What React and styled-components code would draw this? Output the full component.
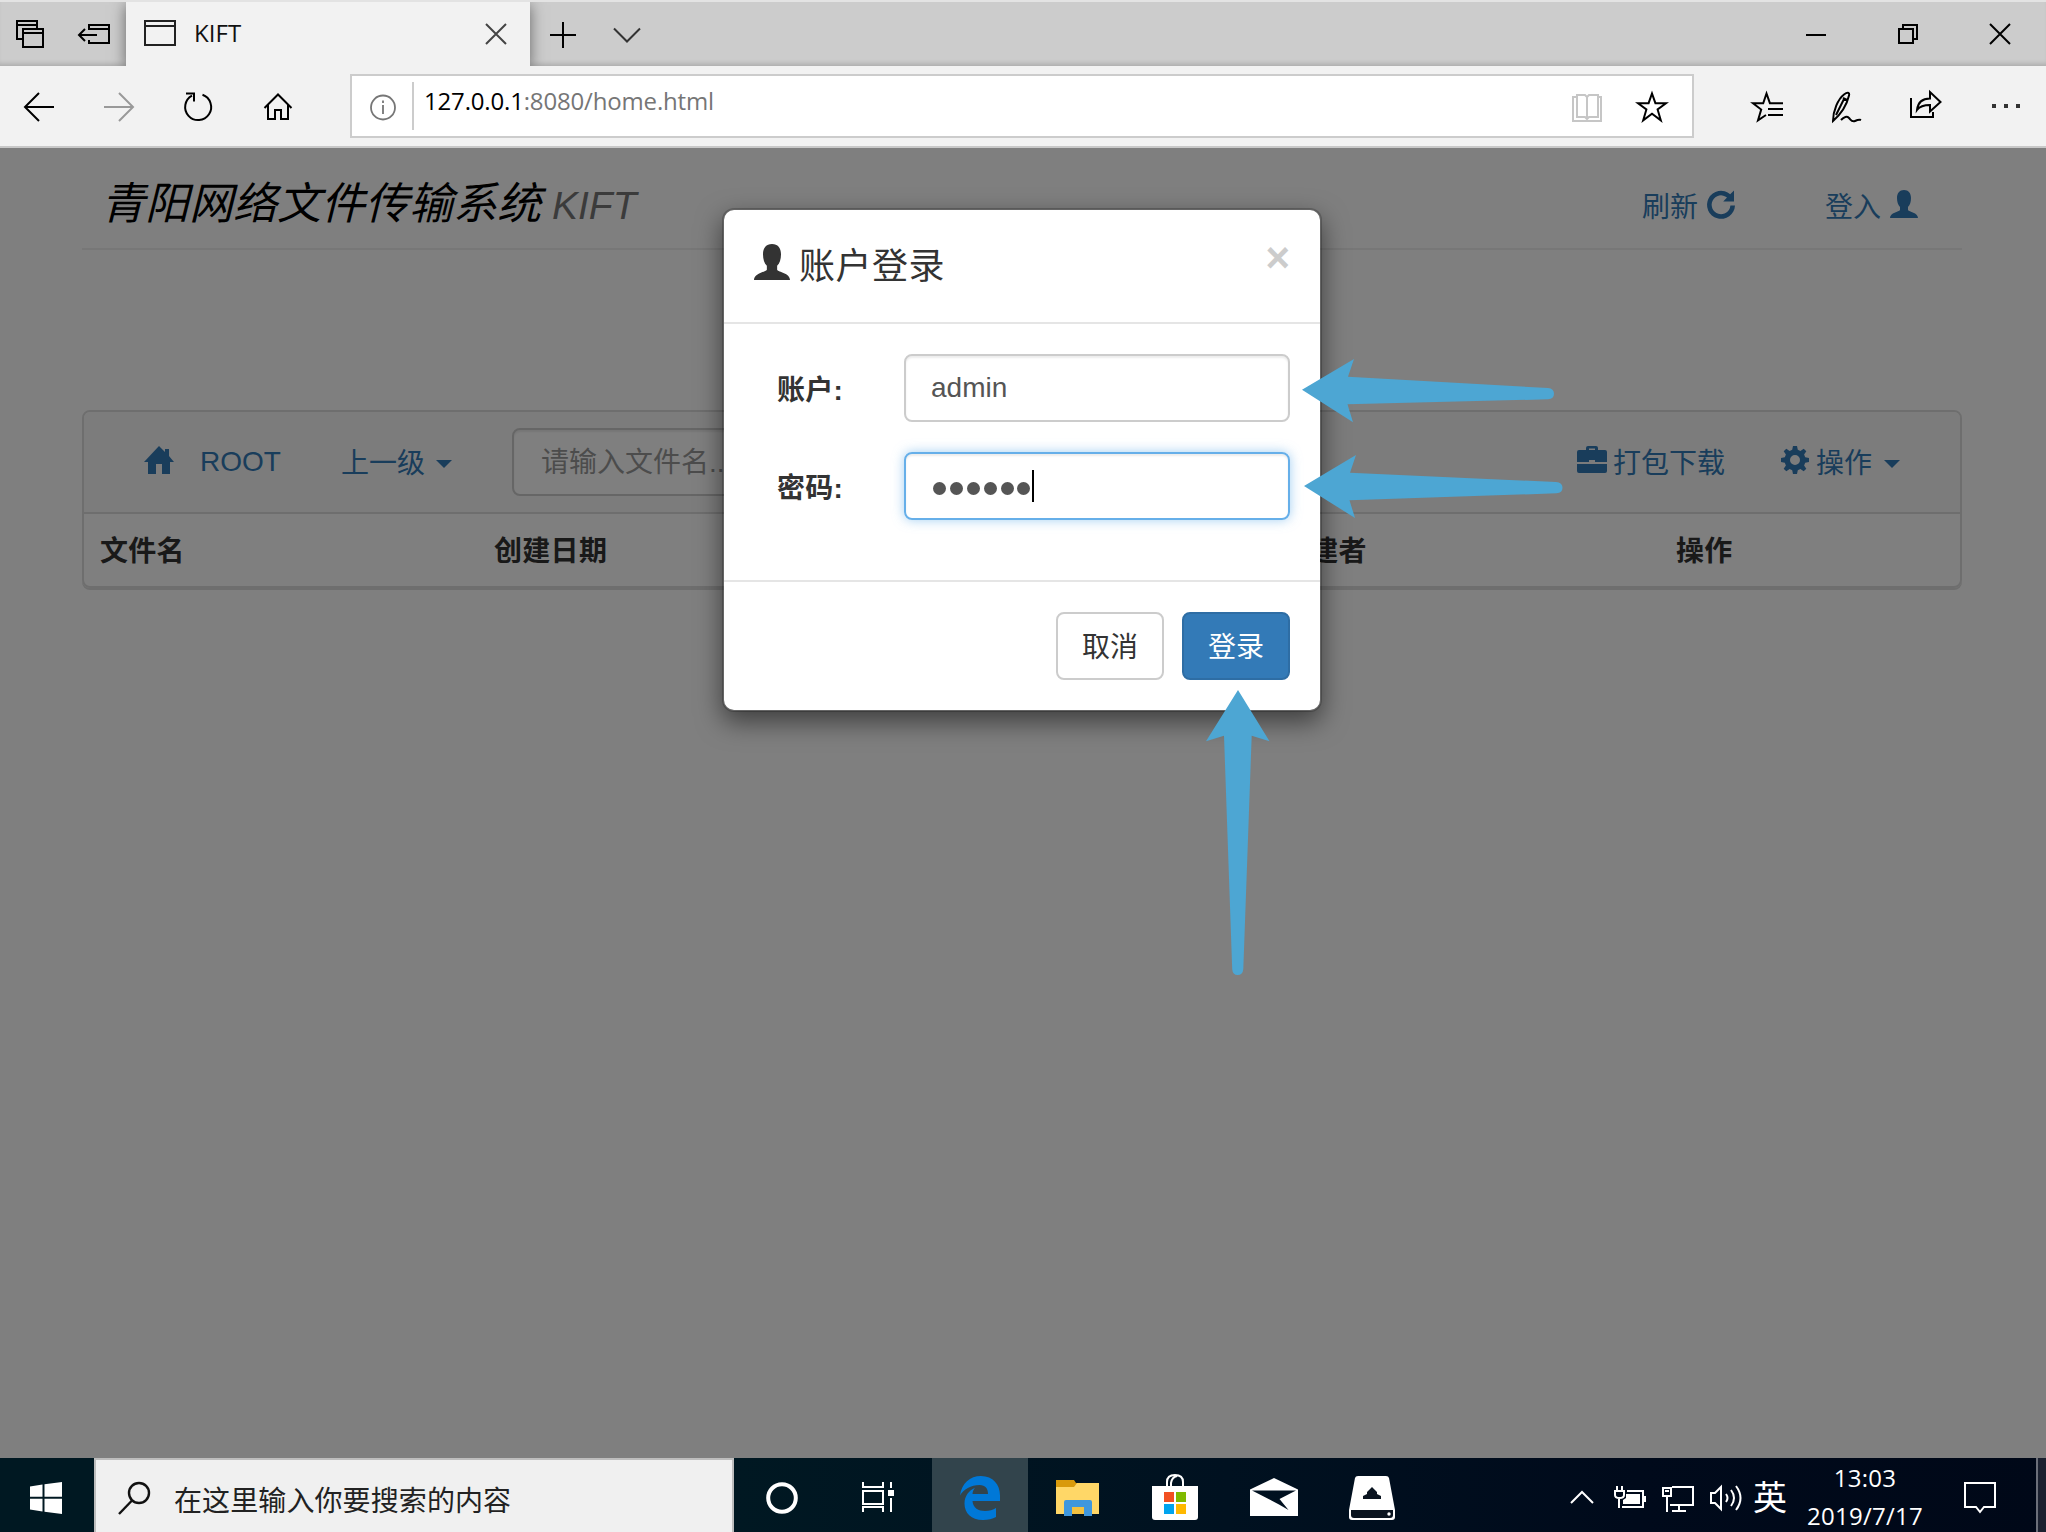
import React from "react";
import styled, { createGlobalStyle, css } from "styled-components";

const ui = `"Open Sans", "Noto Sans CJK SC", sans-serif`;
const body = `"Liberation Sans", "Noto Sans CJK SC", sans-serif`;

const Global = createGlobalStyle`
  * { box-sizing: border-box; }
  body { margin: 0; background: #808080; overflow: hidden; }
`;

const Screen = styled.div`
  position: relative;
  width: 2046px;
  height: 1532px;
  display: flex;
  flex-direction: column;
  overflow: hidden;
  font-family: ${body};
`;

/* ---------- shared icon frame ---------- */

const Svg = styled.svg`
  flex: none;
  display: block;
  width: ${(p) => p.$w || 32}px;
  height: ${(p) => p.$h || p.$w || 32}px;
  margin-left: ${(p) => p.$ml || 0}px;
  margin-bottom: ${(p) => p.$mb || 0}px;
  color: ${(p) => p.$c || "inherit"};
  overflow: visible;
`;

function Line({ children, ml, c = "#000", sw = 2 }) {
  return (
    <Svg $ml={ml} $c={c} viewBox="0 0 32 32" fill="none" stroke="currentColor" strokeWidth={sw}>
      {children}
    </Svg>
  );
}

function Glyph({ children, w, h, ml, mb, box, c }) {
  return (
    <Svg $w={w} $h={h} $ml={ml} $mb={mb} $c={c} viewBox={box || `0 0 ${w} ${h || w}`} fill="currentColor">
      {children}
    </Svg>
  );
}

/* ---------- browser chrome ---------- */

const TabBar = styled.div`
  flex: none;
  height: 66px;
  display: flex;
  align-items: center;
  padding: 0 30px 0 14px;
  background: #ccc;
  border-top: 2px solid #e3e3e3;
  overflow: hidden;
  box-shadow: inset 0 -5px 5px -3px rgba(0, 0, 0, 0.17);
`;

const Tab = styled.div`
  height: 64px;
  width: 404px;
  margin-left: 16px;
  padding: 0 18px;
  display: flex;
  align-items: center;
  background: #f2f2f2;
  box-shadow: 0 3px 14px rgba(0, 0, 0, 0.5);
`;

const TabTitle = styled.span`
  flex: 1;
  padding-left: 18px;
  margin-top: -2px;
  font: 24px/32px ${ui};
  letter-spacing: 0.1px;
  color: #111;
`;

const WindowControls = styled.div`
  margin-left: auto;
  display: flex;
  gap: 60px;
`;

const NavBar = styled.div`
  flex: none;
  height: 82px;
  display: flex;
  align-items: center;
  padding-left: 23px;
  background: #f2f2f2;
  border-bottom: 2px solid #c8c8c8;
`;

const AddressBar = styled.div`
  width: 1344px;
  height: 64px;
  margin-left: 56px;
  padding: 0 24px 0 15px;
  display: flex;
  align-items: center;
  background: #fff;
  border: 2px solid #ccc;
`;

const AddressDivider = styled.div`
  width: 2px;
  height: 48px;
  margin-left: 13px;
  background: #ccc;
`;

const Url = styled.div`
  flex: 1;
  padding-left: 10px;
  margin-top: -10px;
  font: 24px/34px ${ui};
  letter-spacing: -0.17px;
  color: #767676;
  b { font-weight: 400; color: #000; }
`;

function Chrome() {
  return (
    <>
      <TabBar>
        <Line>
          <path d="M8 21H3V3h20v7M3 7h20M9 11h20v18H9zM9 15h20" />
        </Line>
        <Line ml={32}>
          <path d="M11 12V7h20v18H11v-3M11 11h20M19 17H1M7 11l-6 6 6 6" />
        </Line>
        <Tab>
          <Line c="#222">
            <path d="M1 3h30v24H1zM1 8h30" />
          </Line>
          <TabTitle>KIFT</TabTitle>
          <Line c="#444">
            <path d="M6 6l20 20M26 6L6 26" />
          </Line>
        </Tab>
        <Line ml={17}>
          <path d="M3 17h26M16 4v26" />
        </Line>
        <Line ml={32} c="#333">
          <path d="M3 10.500l13 13 13-13" />
        </Line>
        <WindowControls>
          <Line>
            <path d="M6 17h20" />
          </Line>
          <Line>
            <path d="M7 11h14v14H7zM11 11V7h14v14h-4" />
          </Line>
          <Line>
            <path d="M6 6l20 20M26 6L6 26" />
          </Line>
        </WindowControls>
      </TabBar>
      <NavBar>
        <Line>
          <path d="M31 17H2M16 3L2 17l14 14" />
        </Line>
        <Line ml={48} c="#999">
          <path d="M1 17h29M16 3l14 14-14 14" />
        </Line>
        <Line ml={47}>
          <path d="M20.500 4.800A13 13 0 1 1 10 5.600M4 3.500h8v8" />
        </Line>
        <Line ml={48}>
          <path d="M2.500 18L16 4.500 29.500 18M6 15v14h7v-9h6v9h7V15" />
        </Line>
        <AddressBar>
          <Line c="#767676" sw={1.8}>
            <circle cx="16" cy="17.500" r="12" />
            <path d="M16 15v9M16 10.500v2.500" />
          </Line>
          <AddressDivider />
          <Url>
            <b>127.0.0.1</b>:8080/home.html
          </Url>
          <Line c="#c6c6c6">
            <path d="M5 7H2v24h28V7h-3M16 7v23M6 5h8l2 2 2-2h9v22h-9l-2 2-2-2H6z" />
          </Line>
          <Line ml={33}>
            <path d="M16 3.500l3.400 9.700H30l-8.400 6.300 3.200 10.800L16 23.700l-8.800 6.600 3.200-10.800L2 13.200h10.600z" />
          </Line>
        </AddressBar>
        <Line ml={57}>
          <path d="M15 25l-8 5.300 3.200-10.800L2 13.200h10.200l3.300-9.700 3.400 9.700H32M17 19h15M17 25h15" />
        </Line>
        <Line ml={47}>
          <path d="M3 31C3 21 8 9 14 4.500c3-2.200 6-2.500 5 1C17 14 11 24 3 31zM13 8l4 2M6 25L14 9M11 30c3-3.500 6-4 8-2s3 4.500 6 3 4-2 6-1" />
        </Line>
        <Line ml={48}>
          <path d="M1 8v19h22v-5M7 20C8 11 13 8.500 20 8.500V2l10.500 10L20 21.500V15c-6 0-10 1-13 5z" />
        </Line>
        <Glyph w={32} ml={48} c="#333">
          <path d="M2 14h4v4H2zM14 14h4v4h-4zM26 14h4v4h-4z" />
        </Glyph>
      </NavBar>
    </>
  );
}

/* ---------- web page ---------- */

const Page = styled.main`
  position: relative;
  flex: 1;
  padding: 0 84px 0 82px;
  background: #fff;
  color: #333;
  font-size: 28px;
`;

const PageHeader = styled.header`
  height: 102px;
  padding: 0 44px 0 19px;
  display: flex;
  justify-content: space-between;
  border-bottom: 2px solid #eee;
`;

const Title = styled.h1`
  margin: 0;
  padding-top: 11px;
  font: italic 400 44px/90px ${body};
  color: #000;
  small {
    margin-left: 11px;
    font-size: 39px;
    color: #777;
  }
`;

const Links = styled.nav`
  display: flex;
  gap: 90px;
  padding-top: 16px;
`;

const Link = styled.a`
  display: flex;
  align-items: center;
  color: #337ab7;
  white-space: nowrap;
  margin-left: ${(p) => p.$ml || 0}px;
`;

const LinkText = styled.span`
  margin-bottom: 3px;
`;

const Panel = styled.section`
  margin-top: 160px;
  border: 2px solid #ddd;
  border-radius: 8px;
  box-shadow: 0 2px 0 #ddd;
`;

const PanelBar = styled.div`
  height: 102px;
  padding: 0 60px 0 60px;
  display: flex;
  align-items: center;
  background: #f8f8f8;
  border-bottom: 2px solid #ddd;
  border-radius: 6px 6px 0 0;
`;

const Spacer = styled.div`
  flex: 1;
`;

const Caret = styled.i`
  margin-left: ${(p) => p.$ml}px;
  margin-top: 4px;
  border: 8px solid transparent;
  border-top-color: currentColor;
  border-bottom: 0;
`;

const Search = styled.div`
  width: 420px;
  height: 68px;
  margin-left: 60px;
  padding-left: 27px;
  line-height: 66px;
  color: #999;
  background: #fff;
  border: 2px solid #ccc;
  border-radius: 8px;
  box-shadow: inset 0 2px 2px rgba(0, 0, 0, 0.075);
`;

const HeadRow = styled.div`
  height: 72px;
  padding: 0 0 3px 16px;
  display: grid;
  grid-template-columns: repeat(4, 394px) 1fr;
  align-items: center;
  font-weight: 700;
  letter-spacing: 0.3px;
`;

const HeadCell = styled.div`
  grid-column: ${(p) => p.$col};
`;

const Backdrop = styled.div`
  position: absolute;
  inset: 0;
  padding: 60px 2px 0 0;
  display: flex;
  justify-content: center;
  align-items: flex-start;
  background: rgba(0, 0, 0, 0.5);
`;

const Dialog = styled.div`
  width: 600px;
  background: #fff;
  background-clip: padding-box;
  border: 2px solid rgba(0, 0, 0, 0.2);
  border-radius: 12px;
  box-shadow: 0 10px 26px rgba(0, 0, 0, 0.5);
`;

const DialogHeader = styled.div`
  height: 114px;
  padding: 0 30px;
  display: flex;
  align-items: center;
  border-bottom: 2px solid #e5e5e5;
`;

const DialogTitle = styled.h4`
  flex: 1;
  margin: 2px 0 0 9px;
  font: 400 36px/40px ${body};
  letter-spacing: 0.5px;
`;

const Dismiss = styled.button`
  align-self: flex-start;
  margin-top: 27px;
  padding: 0;
  border: 0;
  background: none;
  font: 700 42px/42px ${body};
  color: #ccc;
`;

const DialogBody = styled.div`
  padding: 30px 30px 60px;
  display: grid;
  row-gap: 30px;
`;

const FormRow = styled.div`
  display: flex;
  align-items: center;
`;

const Label = styled.label`
  width: 150px;
  padding-left: 23px;
  margin-bottom: 1px;
  font-weight: 700;
  letter-spacing: 0.3px;
`;

const Field = styled.div`
  flex: 1;
  height: 68px;
  padding-left: 25px;
  display: flex;
  align-items: center;
  color: #555;
  border: 2px solid #ccc;
  border-radius: 8px;
  box-shadow: inset 0 2px 2px rgba(0, 0, 0, 0.075);
  ${(p) =>
    p.$focus &&
    css`
      border-color: #66afe9;
      box-shadow: inset 0 2px 2px rgba(0, 0, 0, 0.075), 0 0 12px rgba(102, 175, 233, 0.6);
    `}
`;

const Dot = styled.i`
  width: 13px;
  height: 13px;
  margin: 4px 1.9px 0 2px;
  border-radius: 50%;
  background: #555;
`;

const TextCursor = styled.i`
  width: 2px;
  height: 32px;
  background: #000;
`;

const DialogFooter = styled.div`
  padding: 30px;
  display: flex;
  justify-content: flex-end;
  gap: 18px;
  border-top: 2px solid #e5e5e5;
`;

const Button = styled.button`
  width: 108px;
  height: 68px;
  padding: 3px 0 0;
  font: 28px/40px ${body};
  color: ${(p) => (p.$primary ? "#fff" : "#333")};
  background: ${(p) => (p.$primary ? "#337ab7" : "#fff")};
  border: 2px solid ${(p) => (p.$primary ? "#2e6da4" : "#ccc")};
  border-radius: 8px;
`;

const PERSON =
  "M14 0c4.500 0 7 3 7 8 0 4-1 7-3 9v3c1 2 10 2.500 10 8H0c0-5.500 9-6 10-8v-3c-2-2-3-5-3-9 0-5 2.500-8 7-8z";

function LoginDialog() {
  return (
    <Backdrop>
      <Dialog>
        <DialogHeader>
          <Glyph w={36} mb={8} box="0 0 28 28">
            <path d={PERSON} />
          </Glyph>
          <DialogTitle>账户登录</DialogTitle>
          <Dismiss>×</Dismiss>
        </DialogHeader>
        <DialogBody>
          <FormRow>
            <Label>账户:</Label>
            <Field>admin</Field>
          </FormRow>
          <FormRow>
            <Label>密码:</Label>
            <Field $focus>
              {[0, 1, 2, 3, 4, 5].map((i) => (
                <Dot key={i} />
              ))}
              <TextCursor />
            </Field>
          </FormRow>
        </DialogBody>
        <DialogFooter>
          <Button>取消</Button>
          <Button $primary>登录</Button>
        </DialogFooter>
      </Dialog>
    </Backdrop>
  );
}

function WebPage() {
  return (
    <Page>
      <PageHeader>
        <Title>
          青阳网络文件传输系统<small>KIFT</small>
        </Title>
        <Links>
          <Link>
            <LinkText>刷新</LinkText>
            <Glyph w={28} ml={9} mb={4}>
              <path d="M23.200 4.300L27 .6V11.500H16.200l3.800-4A9.400 9.400 0 1 0 23.400 15.500H28A14 14 0 1 1 23.200 4.300z" />
            </Glyph>
          </Link>
          <Link>
            <LinkText>登入</LinkText>
            <Glyph w={28} ml={9} mb={4}>
              <path d={PERSON} />
            </Glyph>
          </Link>
        </Links>
      </PageHeader>
      <Panel>
        <PanelBar>
          <Link>
            <Glyph w={30} h={28} mb={4}>
              <path d="M15 0l6 6V3h4v7l5 6h-4v12h-8V18h-6v10H4V16H0z" />
            </Glyph>
          </Link>
          <Link $ml={26}>ROOT</Link>
          <Link $ml={60}>
            <LinkText>上一级</LinkText>
            <Caret $ml={11} />
          </Link>
          <Search>请输入文件名...</Search>
          <Spacer />
          <Link>
            <Glyph w={30} h={28} mb={4}>
              <path
                d="M9 4V2q0-2 2-2h8q2 0 2 2v2h7q2 0 2 2v10H18v-2h-6v2H0V6q0-2 2-2zM12 4h6V2.500h-6zM0 18h30v7q0 2-2 2H2q-2 0-2-2z"
                fillRule="evenodd"
              />
            </Glyph>
          </Link>
          <Link $ml={6}>
            <LinkText>打包下载</LinkText>
          </Link>
          <Link $ml={56}>
            <Glyph w={28} h={28} mb={4}>
              <path
                fillRule="evenodd"
                d="M12 0h4l.8 3.800 2.600 1.100L22.700 2.700l2.600 2.600-2.200 3.300 1.100 2.600L28 12v4l-3.800.8-1.100 2.600 2.200 3.300-2.600 2.600-3.300-2.200-2.600 1.100L16 28h-4l-.8-3.800-2.600-1.100-3.300 2.200-2.600-2.600 2.200-3.300-1.100-2.600L0 16v-4l3.800-.8 1.100-2.600L2.700 5.300l2.600-2.600 3.300 2.200 2.600-1.100zM14 9a5 5 0 1 0 0 10 5 5 0 0 0 0-10z"
              />
            </Glyph>
          </Link>
          <Link $ml={7}>
            <LinkText>操作</LinkText>
            <Caret $ml={12} />
          </Link>
        </PanelBar>
        <HeadRow>
          <HeadCell $col={1}>文件名</HeadCell>
          <HeadCell $col={2}>创建日期</HeadCell>
          <HeadCell $col={4}>创建者</HeadCell>
          <HeadCell $col={5}>操作</HeadCell>
        </HeadRow>
      </Panel>
      <LoginDialog />
    </Page>
  );
}

/* ---------- taskbar ---------- */

const Taskbar = styled.footer`
  flex: none;
  height: 74px;
  display: flex;
  color: #fff;
  background: linear-gradient(90deg, #001822 0%, #001822 36%, #001120 60%, #000a1b 80%, #000818 100%);
`;

const TaskCell = styled.div`
  flex: none;
  width: ${(p) => p.$w || 96}px;
  margin-left: ${(p) => p.$ml || 0}px;
  display: flex;
  align-items: center;
  justify-content: center;
  background: ${(p) => (p.$active ? "#32444c" : "none")};
`;

const SearchBox = styled.div`
  flex: none;
  width: 640px;
  padding-left: 22px;
  display: flex;
  align-items: center;
  font: 28px/40px "Noto Sans CJK SC", sans-serif;
  color: #222;
  background: #f0f0f0;
  border: 2px solid #bdbdbd;
  border-bottom: 0;
`;

const SearchText = styled.span`
  margin: 5px 0 0 24px;
  letter-spacing: 0.1px;
`;

const Tray = styled.div`
  margin-left: auto;
  display: flex;
  align-items: center;
`;

const Ime = styled.span`
  margin: 1px 0 0 11px;
  font: 34px/40px "Noto Sans CJK SC", sans-serif;
`;

const Clock = styled.div`
  width: 130px;
  margin-left: 13px;
  align-self: flex-start;
  padding-top: 1px;
  text-align: center;
  font: 24px/38px ${ui};
  letter-spacing: 0.25px;
`;

const ShowDesktop = styled.div`
  width: 10px;
  height: 74px;
  margin-left: 40px;
  background: #1b2130;
  border-left: 2px solid #6b6f7a;
`;

function WindowsBar() {
  return (
    <Taskbar>
      <TaskCell $w={94}>
        <Glyph w={32} ml={-2} mb={-6}>
          <path d="M0 4.500L12.500 2.500V14.800H0zM14.500 2.200L32 0v14.800H14.500zM0 16.800h12.500v12.600L0 27.500zM14.500 16.800H32V32l-17.500-2.300z" />
        </Glyph>
      </TaskCell>
      <SearchBox>
        <Line c="#111" sw={2.4}>
          <circle cx="21" cy="13" r="10" />
          <path d="M14 20.500L1 34" />
        </Line>
        <SearchText>在这里输入你要搜索的内容</SearchText>
      </SearchBox>
      <TaskCell>
        <Glyph w={32} mb={-6}>
          <circle cx="16" cy="16" r="13.800" fill="none" stroke="#fff" strokeWidth="4" />
        </Glyph>
      </TaskCell>
      <TaskCell>
        <Svg $w={34} $h={32} $mb={-6} viewBox="0 0 34 32" fill="none" stroke="#fff" strokeWidth="2">
          <path d="M2 0v5h20V0M2 9h20v13H2zM2 30v-5h20v5M30 0v6M30 16v14" />
          <path d="M27 8h6v6h-6z" fill="#fff" stroke="none" />
        </Svg>
      </TaskCell>
      <TaskCell $active $ml={6}>
        <Glyph w={40} h={44} mb={-6} c="#0078d7">
          <path d="M0 19.500C1.500 7.500 10 0 21 0c12 0 19 8.500 19 19.500V25H12.500c.5 7 6 10 12.500 10 4.500 0 8-1.300 11-3v9c-3.500 2-8 3-13 3C11 44 4.500 37 4.500 27.500 4.500 20 9 14.500 15 11.800c-1.600 1.800-2.300 4-2.500 6.200H28c0-5.500-2.500-9-8.500-9C11 9 3.500 13.500 0 19.500z" />
        </Glyph>
      </TaskCell>
      <TaskCell $ml={2}>
        <Svg $w={44} $h={36} $mb={-6} viewBox="0 0 44 36">
          <path d="M0 0h18l2 3h23v31H0z" fill="#d99a0b" />
          <path d="M0 7h18l3-4h22v31H0z" fill="#ffd767" />
          <path d="M8 22q0-2 2-2h24q2 0 2 2v14h-8v-9H16v9H8z" fill="#3f97dd" />
          <path d="M16 27h12v7H16z" fill="#f2c140" />
        </Svg>
      </TaskCell>
      <TaskCell $ml={2}>
        <Svg $w={46} $h={46} $ml={-2} $mb={-4} viewBox="0 0 46 46">
          <path d="M15 13V8q0-7 8-7t8 7v5M19 13V9q1-6 6-7" fill="none" stroke="#fff" strokeWidth="2" />
          <path d="M0 12h46v31q0 3-3 3H3q-3 0-3-3z" fill="#fff" />
          <path d="M12 18h10v10H12z" fill="#f25022" />
          <path d="M24 18h10v10H24z" fill="#7fba00" />
          <path d="M12 30h10v10H12z" fill="#00a4ef" />
          <path d="M24 30h10v10H24z" fill="#ffb900" />
        </Svg>
      </TaskCell>
      <TaskCell $ml={2}>
        <Glyph w={48} h={38} mb={-4}>
          <path d="M0 11.500L24 0l24 11.500V38H0zM2 12.500l27 14 9.500 5.500-9-11L46 12.500z" fillRule="evenodd" />
        </Glyph>
      </TaskCell>
      <TaskCell $ml={2}>
        <Svg $w={48} $h={44} $mb={-6} viewBox="0 0 48 44">
          <path d="M7 2q.5-2 3-2h28q2.500 0 3 2l6 32v7q0 3-3 3H4q-3 0-3-3v-7z" fill="#fff" />
          <path d="M3 34h42v5q0 3-3 3H6q-3 0-3-3z" fill="#0a1420" />
          <circle cx="41" cy="38" r="1.700" fill="#fff" />
          <path d="M24 11l5 5v2l4 2v3H15v-3l4-2v-2z" fill="#0a1420" />
        </Svg>
      </TaskCell>
      <Tray>
        <Svg $w={24} $h={14} $mb={-4} viewBox="0 0 24 14" fill="none" stroke="#fff" strokeWidth="2">
          <path d="M1 13L12 2l11 11" />
        </Svg>
        <Svg $w={32} $h={24} $ml={20} $mb={-5} viewBox="0 0 32 24" fill="none" stroke="#fff" strokeWidth="2">
          <path d="M3 0v5M8 0v5M1 5h9v4q0 3-4.500 3T1 9zM5 12v10M13 5h16v16H8M31 10v6" />
          <path d="M12 8h14v10H9v-4l3-2z" fill="#fff" stroke="none" />
        </Svg>
        <Svg $w={32} $h={26} $ml={16} $mb={-8} viewBox="0 0 32 26" fill="none" stroke="#fff" strokeWidth="2">
          <path d="M10 1h21v18H8M1 2h8v8H1zM5 10v16M3 5h4M17 19v5M10 25h14" />
        </Svg>
        <Svg $w={32} $h={28} $ml={16} $mb={-6} viewBox="0 0 32 28" fill="none" stroke="#fff" strokeWidth="2">
          <path d="M1 9h4l6-6v22l-6-6H1zM16 10q3 4 0 8M21 6q6 8 0 16M26 2q9 12 0 24" />
        </Svg>
        <Ime>英</Ime>
        <Clock>
          <div>13:03</div>
          <div>2019/7/17</div>
        </Clock>
        <Svg $w={32} $h={32} $ml={34} $mb={-6} viewBox="0 0 32 32" fill="none" stroke="#fff" strokeWidth="2">
          <path d="M1 1h30v24H20l-4 5-4-5H1z" />
        </Svg>
        <ShowDesktop />
      </Tray>
    </Taskbar>
  );
}

/* ---------- pointer arrows drawn over the window ---------- */

const Pointer = styled.svg`
  position: absolute;
  left: ${(p) => p.$x}px;
  top: ${(p) => p.$y}px;
  width: ${(p) => p.$w}px;
  height: ${(p) => p.$h}px;
  fill: #4da6d3;
  overflow: visible;
`;

export default function App() {
  return (
    <Screen>
      <Global />
      <Chrome />
      <WebPage />
      <WindowsBar />
      <Pointer $x={1302} $y={359} $w={252} $h={64}>
        <path d="M0 30.700L52 0 46 17.700 246 29q6 .5 6 5.700t-6 5.600L45.500 45.300 51 63.300z" />
      </Pointer>
      <Pointer $x={1304} $y={455} $w={258} $h={64}>
        <path d="M0 31L52 0 46 17.700 252 27q6.500.5 6.500 5.700t-6 5.600L45.500 45.300 51 63z" />
      </Pointer>
      <Pointer $x={1206} $y={690} $w={64} $h={286}>
        <path d="M32 0L63.500 51.300 45.700 45.700 37.300 279q-.5 6-5.600 6t-5.500-6L18 45.700 0 51.300z" />
      </Pointer>
    </Screen>
  );
}
